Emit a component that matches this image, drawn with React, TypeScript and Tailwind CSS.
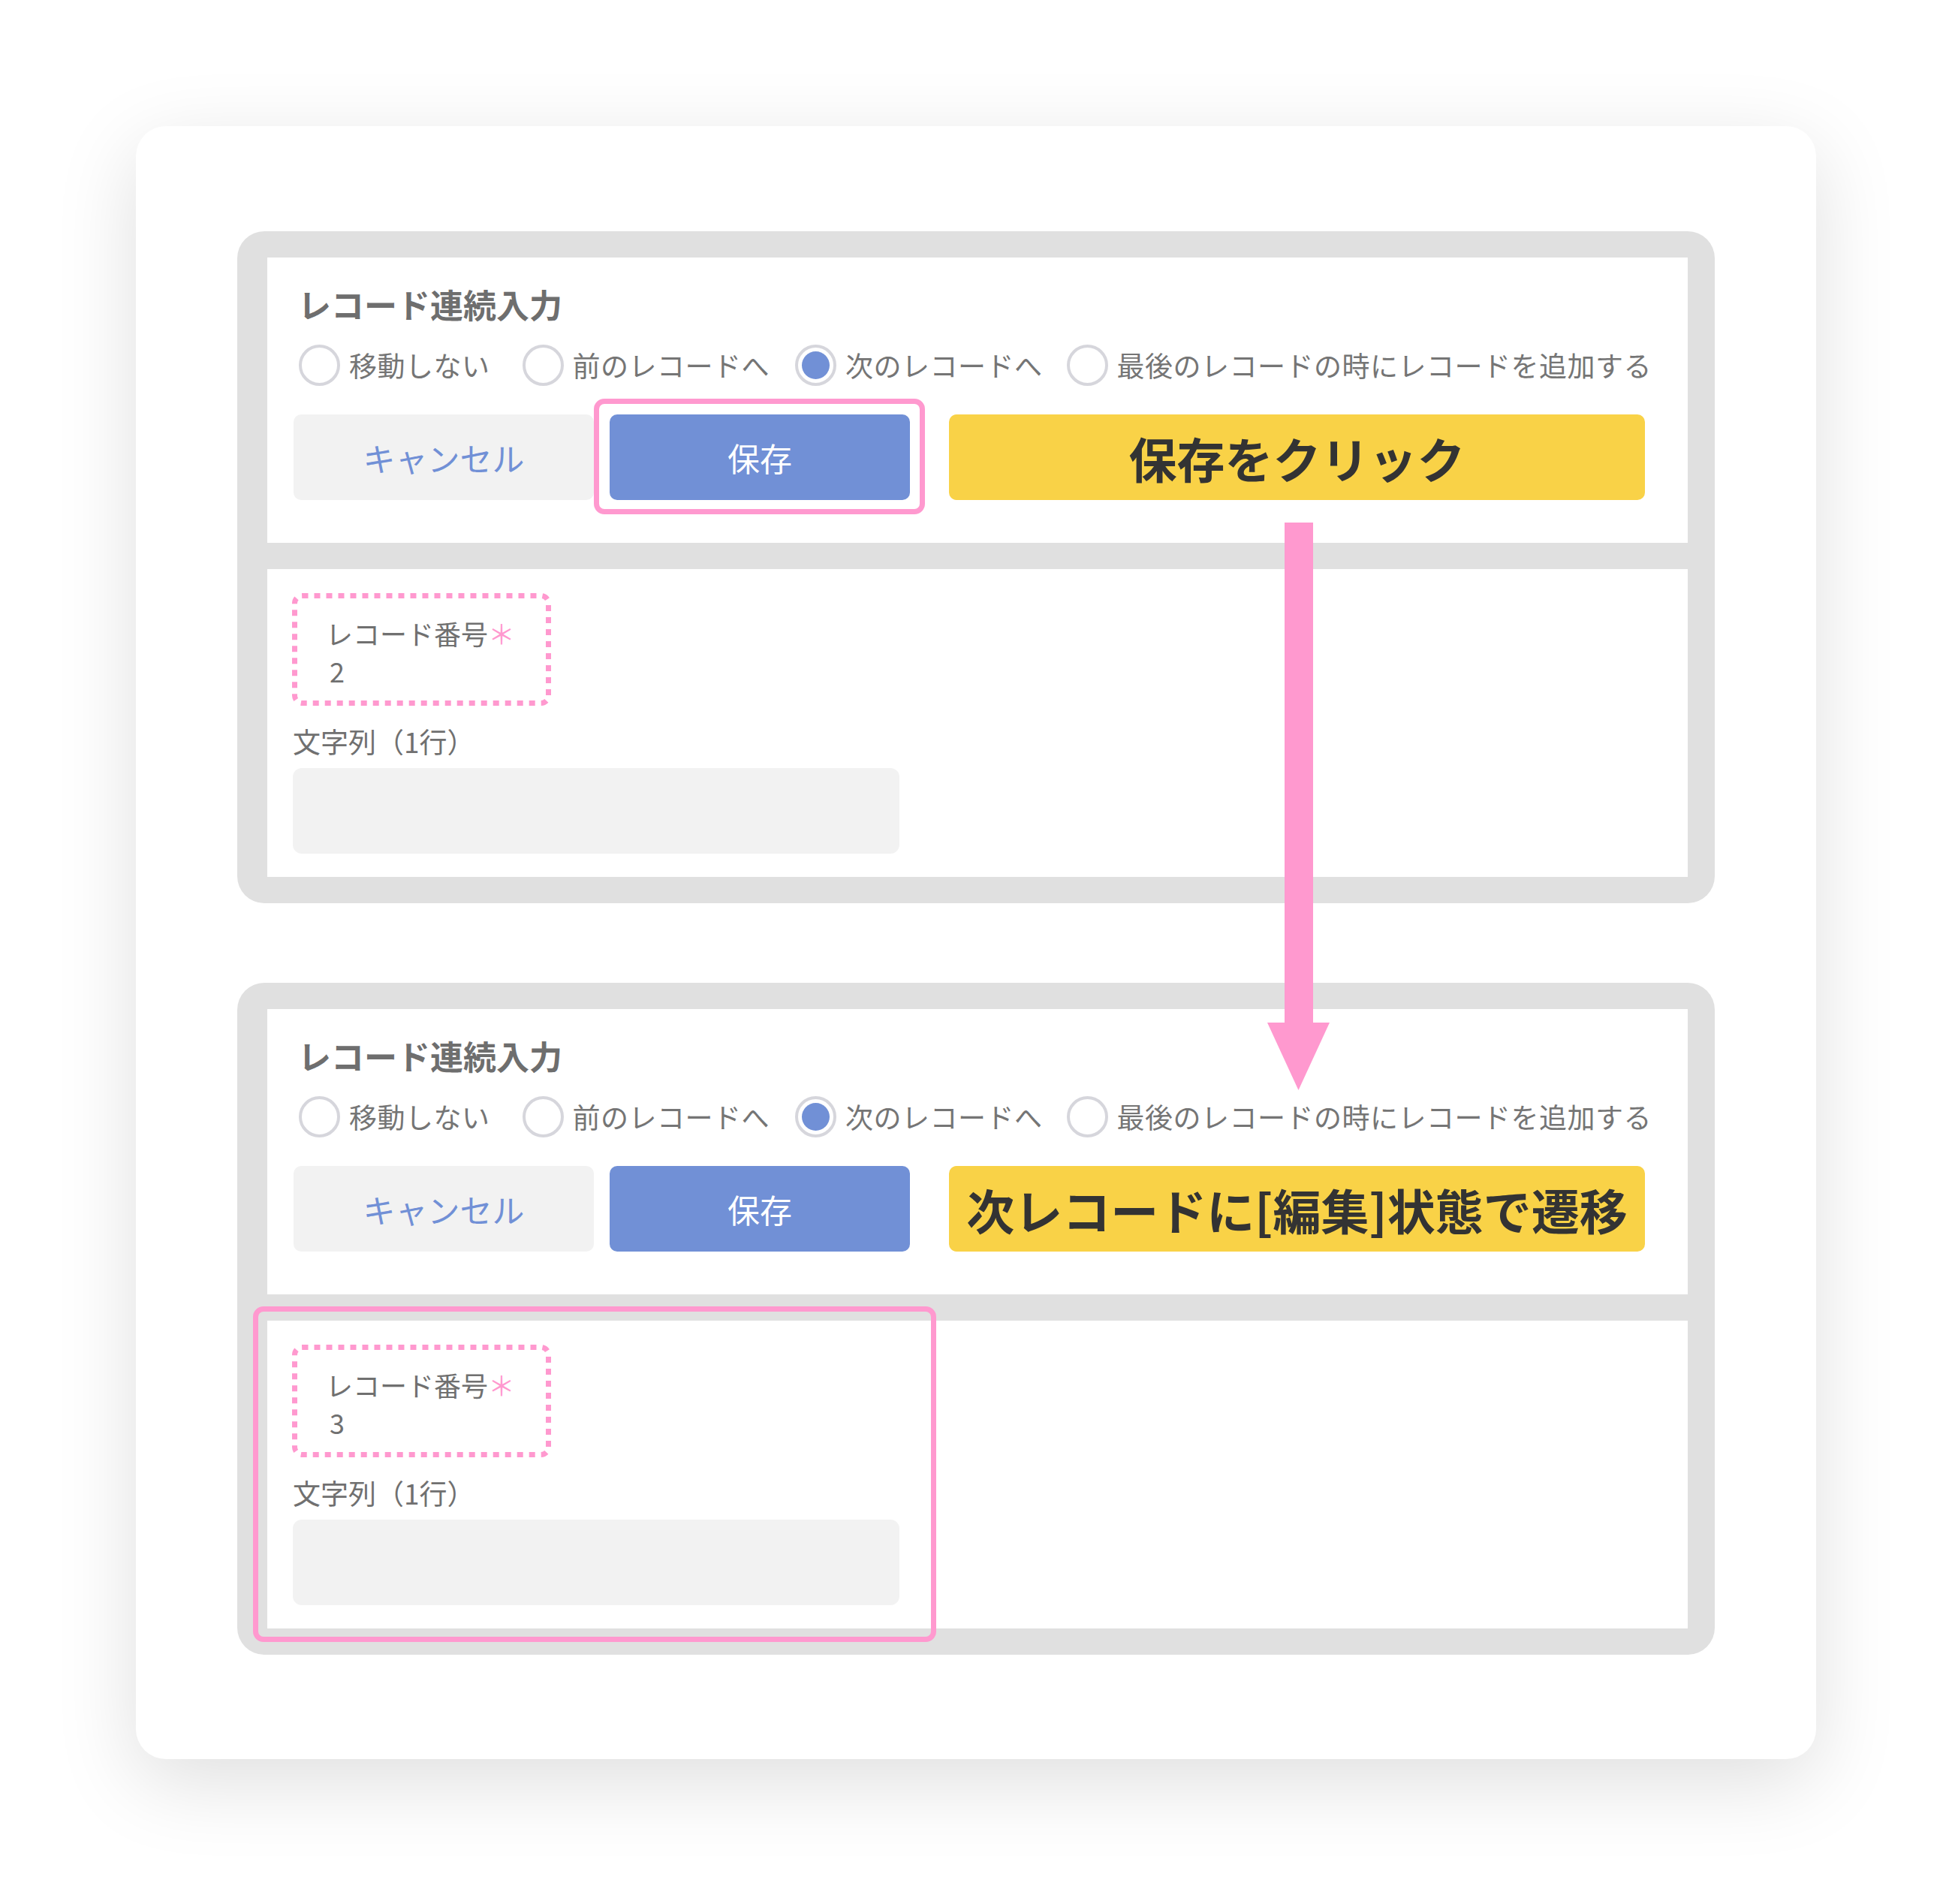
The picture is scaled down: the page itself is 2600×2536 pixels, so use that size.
const PINK = "#ff99cf";

const radios = [
  { label: "移動しない", checked: false, gap: "mr-[43px]" },
  { label: "前のレコードへ", checked: false, gap: "mr-[34px]" },
  { label: "次のレコードへ", checked: true, gap: "mr-[32px]" },
  { label: "最後のレコードの時にレコードを追加する", checked: false, gap: "" },
];

function Radio({ label, checked, gap }: { label: string; checked: boolean; gap: string }) {
  return (
    <div className={`flex items-center ${gap}`}>
      <span className="flex h-[55px] w-[55px] shrink-0 items-center justify-center rounded-full border-[4px] border-[#d6d6dc] bg-white">
        {checked && <span className="h-[37px] w-[37px] rounded-full bg-[#7190d6]" />}
      </span>
      <span className="ml-[12px] whitespace-nowrap text-[37px] leading-[55px] tracking-[0.5px] text-[#757575]">
        {label}
      </span>
    </div>
  );
}

function DottedFrame() {
  return (
    <svg className="pointer-events-none absolute left-0 top-0" width="345" height="150" viewBox="0 0 345 150">
      <rect
        x="3.5"
        y="3.5"
        width="338"
        height="143"
        rx="10"
        fill="none"
        stroke={PINK}
        strokeWidth="7"
        strokeDasharray="8 8"
      />
    </svg>
  );
}

function Panel({ num, caption, highlightSave, highlightBody }: { num: string; caption: string; highlightSave?: boolean; highlightBody?: boolean }) {
  return (
    <div className="flex flex-col gap-[35px] rounded-[36px] bg-[#e0e0e0] py-[35px] pl-[40px] pr-[36px]">
      {/* header: continuous input options */}
      <div className="bg-white pb-[57px] pl-[35px] pr-[57px] pt-[40px]">
        <h2 className="pl-[6px] text-[44px] font-bold leading-[44px] text-[#6e6e6e]">レコード連続入力</h2>
        <div className="mt-[32px] flex h-[55px] items-center pl-[7px]">
          {radios.map((r) => (
            <Radio key={r.label} {...r} />
          ))}
        </div>
        <div className="mt-[38px] flex h-[114px]">
          <div className="flex w-[400px] items-center justify-center rounded-[10px] bg-[#f2f2f2] text-[43px] text-[#7190d6]">
            キャンセル
          </div>
          <div className="relative ml-[21px] flex w-[400px] items-center justify-center rounded-[10px] bg-[#7190d6] text-[43px] text-white">
            保存
            {highlightSave && (
              <span className="pointer-events-none absolute -bottom-[19px] -left-[21px] -right-[20px] -top-[21px] rounded-[14px] border-[7px] border-[#ff99cf]" />
            )}
          </div>
          <div className="ml-[52px] flex flex-1 items-center justify-center rounded-[10px] bg-[#f9d247] text-[64px] font-bold text-[#333333]">
            {caption}
          </div>
        </div>
      </div>

      {/* record body */}
      <div className="relative bg-white pb-[31px] pl-[34px] pt-[32px]">
        {highlightBody && (
          <span className="pointer-events-none absolute -bottom-[18px] -left-[19px] -top-[19px] w-[910px] rounded-[14px] border-[7px] border-[#ff99cf]" />
        )}
        <div className="relative -ml-[1px] h-[150px] w-[345px] pl-[45px] pt-[28px] text-[36px] leading-[50px] text-[#707070]">
          <DottedFrame />
          <div>
            レコード番号<span className="text-[#ff99cf]">＊</span>
          </div>
          <div className="pl-[5px]">{num}</div>
        </div>
        <div className="mt-[22px] text-[37px] leading-[50px] text-[#707070]">文字列（1行）</div>
        <div className="mt-[11px] h-[114px] w-[808px] rounded-[12px] bg-[#f2f2f2]" />
      </div>
    </div>
  );
}

export default function App() {
  return (
    <div className="h-[2536px] w-[2600px] overflow-hidden bg-white pl-[181px] pt-[168px] font-['Noto_Sans_CJK_JP',sans-serif]">
      <div className="relative flex w-[2238px] flex-col gap-[106px] rounded-[40px] bg-white px-[135px] pb-[139px] pt-[140px] shadow-[0_30px_110px_rgba(0,0,0,0.13)]">
        <Panel num="2" caption="保存をクリック" highlightSave />
        <Panel num="3" caption="次レコードに[編集]状態で遷移" highlightBody />

        {/* arrow from first panel to second */}
        <svg className="pointer-events-none absolute left-[1507px] top-[528px]" width="83" height="756" viewBox="0 0 83 756">
          <rect x="23" y="0" width="38" height="667" fill={PINK} />
          <polygon points="0,666 83,666 41.5,756" fill={PINK} />
        </svg>
      </div>
    </div>
  );
}
